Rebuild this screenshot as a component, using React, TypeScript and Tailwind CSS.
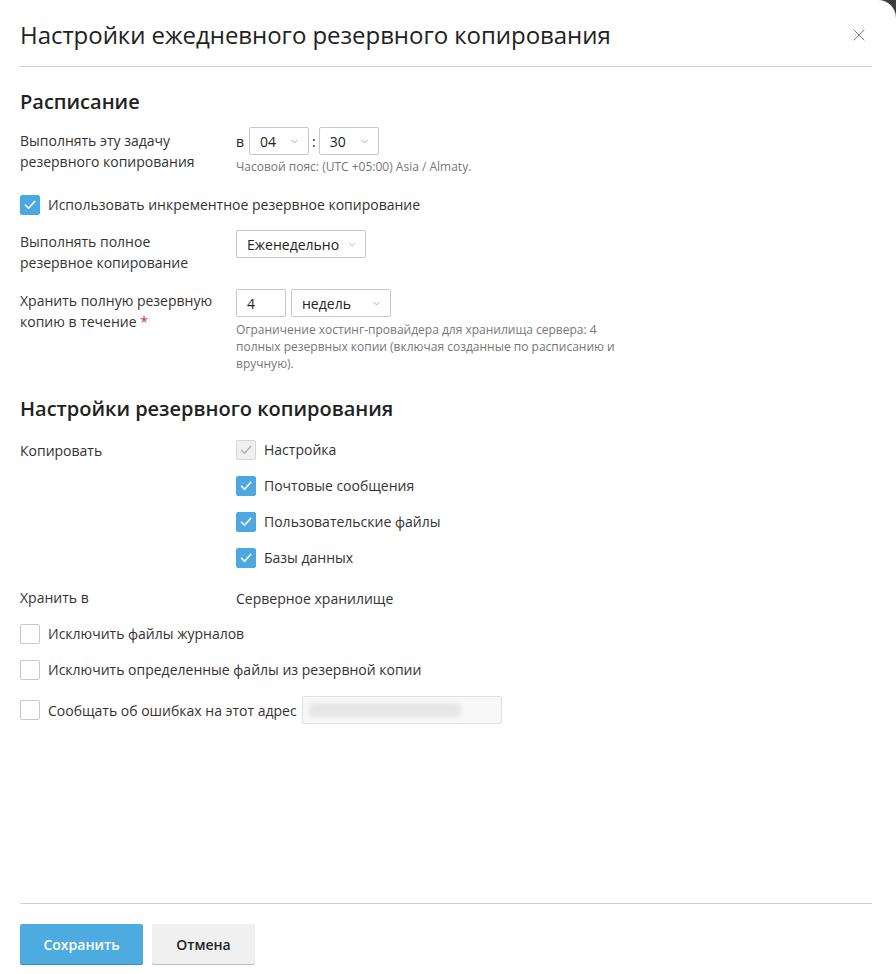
import { ChevronDown, X } from 'lucide-react';

function Check({ checked = false, disabled = false }: { checked?: boolean; disabled?: boolean }) {
  // box: blue when on, light grey when locked, white when off
  const box = disabled
    ? 'bg-[#f0f0f0] border border-[#d6d6d6]'
    : checked
      ? 'bg-[#4da8df] border border-[#4da8df]'
      : 'bg-white border border-[#c8c8c8]';
  return (
    <span className={`w-5 h-5 rounded-[2px] flex items-center justify-center shrink-0 ${box}`}>
      {checked && (
        <svg width="14" height="14" viewBox="0 0 14 14" fill="none">
          <path
            d="M2.5 7.2 L5.6 10.3 L11.6 3.4"
            stroke={disabled ? '#b5b5b5' : '#ffffff'}
            strokeWidth="1.6"
            strokeLinecap="round"
            strokeLinejoin="round"
          />
        </svg>
      )}
    </span>
  );
}

function Select({ value, width }: { value: string; width: string }) {
  return (
    <div className={`${width} h-7 border border-[#c8c8c8] rounded-[2px] bg-white flex items-center justify-between pl-2.5 pr-2 text-[14px] text-[#222]`}>
      <span>{value}</span>
      <ChevronDown size={11} strokeWidth={1.5} className="text-[#888]" />
    </div>
  );
}

function Row({ label, children }: { label: React.ReactNode; children: React.ReactNode }) {
  return (
    <div className="flex">
      <div className="w-[216px] shrink-0 text-[14px] leading-[21px] text-[#333] pt-[1px]">{label}</div>
      <div className="flex-1">{children}</div>
    </div>
  );
}

export default function App() {
  return (
    <div className="w-[896px] h-[974px] bg-[#3c3c3c] font-['Open_Sans',sans-serif]">
      <div className="w-full h-full bg-white rounded-tr-[18px] flex flex-col pl-5 pr-6">
        {/* Заголовок окна */}
        <div className="flex items-center justify-between h-[67px] border-b border-[#d0d0d0] pt-1">
          <h1 className="text-[24px] font-normal text-[#222] tracking-[-0.05px]">
            Настройки ежедневного резервного копирования
          </h1>
          <X size={20} strokeWidth={1} className="text-[#666] mr-[3px]" />
        </div>

        {/* Расписание */}
        <h2 className="text-[20px] font-semibold text-[#222] mt-[21px] leading-7">Расписание</h2>

        <div className="mt-[13px]">
          <Row label={<>Выполнять эту задачу<br />резервного копирования</>}>
            <div className="flex items-center gap-[4px] -mt-[2px]">
              <span className="text-[14px] text-[#222] mr-[1px]">в</span>
              <Select value="04" width="w-[60px]" />
              <span className="text-[14px] text-[#222] -mx-[1px]">:</span>
              <Select value="30" width="w-[60px]" />
            </div>
            <div className="text-[12px] text-[#777] mt-[3px]">Часовой пояс: (UTC +05:00) Asia / Almaty.</div>
          </Row>
        </div>

        <div className="flex items-center gap-2 mt-[18px]">
          <Check checked />
          <span className="text-[14px] text-[#333]">Использовать инкрементное резервное копирование</span>
        </div>

        <div className="mt-[15px]">
          <Row label={<>Выполнять полное<br />резервное копирование</>}>
            <div className="w-[130px]">
              <div className="h-7 border border-[#c8c8c8] rounded-[2px] flex items-center pl-2.5 pr-2 gap-2 text-[14px] text-[#222]">
                <span>Еженедельно</span>
                <ChevronDown size={11} strokeWidth={1.5} className="text-[#888]" />
              </div>
            </div>
          </Row>
        </div>

        <div className="mt-[16px]">
          <Row label={<>Хранить полную резервную<br />копию в течение <span className="text-[#d0312d]">*</span></>}>
            <div className="flex items-center gap-[5px]">
              <div className="w-[50px] h-7 border border-[#c8c8c8] rounded-[2px] flex items-center px-2.5 text-[14px] text-[#222]">4</div>
              <Select value="недель" width="w-[100px]" />
            </div>
            <div className="text-[12px] leading-[17px] text-[#777] mt-[4px] w-[390px]">
              Ограничение хостинг-провайдера для хранилища сервера: 4 полных резервных копии (включая созданные по расписанию и вручную).
            </div>
          </Row>
        </div>

        {/* Параметры копирования */}
        <h2 className="text-[20px] font-semibold text-[#222] mt-[23px] leading-7">Настройки резервного копирования</h2>

        <div className="mt-[16px]">
          <Row label="Копировать">
            <div className="flex flex-col gap-[15px]">
              <div className="flex items-center gap-2"><Check checked disabled /><span className="text-[14px] text-[#333]">Настройка</span></div>
              <div className="flex items-center gap-2"><Check checked /><span className="text-[14px] text-[#333]">Почтовые сообщения</span></div>
              <div className="flex items-center gap-2"><Check checked /><span className="text-[14px] text-[#333]">Пользовательские файлы</span></div>
              <div className="flex items-center gap-2"><Check checked /><span className="text-[14px] text-[#333]">Базы данных</span></div>
            </div>
          </Row>
        </div>

        <div className="mt-[18px]">
          <Row label="Хранить в">
            <span className="text-[14px] leading-[21px] text-[#333]">Серверное хранилище</span>
          </Row>
        </div>

        <div className="flex items-center gap-2 mt-[13px]">
          <Check />
          <span className="text-[14px] text-[#333]">Исключить файлы журналов</span>
        </div>
        <div className="flex items-center gap-2 mt-[15px]">
          <Check />
          <span className="text-[14px] text-[#333]">Исключить определенные файлы из резервной копии</span>
        </div>
        <div className="flex items-center gap-2 mt-[16px]">
          <Check />
          <span className="text-[14px] text-[#333]">Сообщать об ошибках на этот адрес</span>
          <div className="w-[200px] h-7 border border-[#e0e0e0] rounded-[2px] bg-[#f8f8f8] flex items-center px-1.5 -ml-[3px]">
            <div className="w-[152px] h-3.5 rounded-sm bg-[#e6e6e6] blur-[2px]" />
          </div>
        </div>

        <div className="flex-1" />

        {/* Кнопки */}
        <div className="border-t border-[#d0d0d0] pt-5 pb-[10px] flex gap-[9px]">
          <button className="h-10 w-[123px] rounded-[2px] bg-[#4dabe0] shadow-[0_1px_0_#2f8cc4] text-white text-[14px] font-semibold">
            Сохранить
          </button>
          <button className="h-10 w-[103px] rounded-[2px] bg-[#f0f0f0] shadow-[0_1px_0_#bdbdbd] text-[#222] text-[14px] font-semibold">
            Отмена
          </button>
        </div>
      </div>
    </div>
  );
}
